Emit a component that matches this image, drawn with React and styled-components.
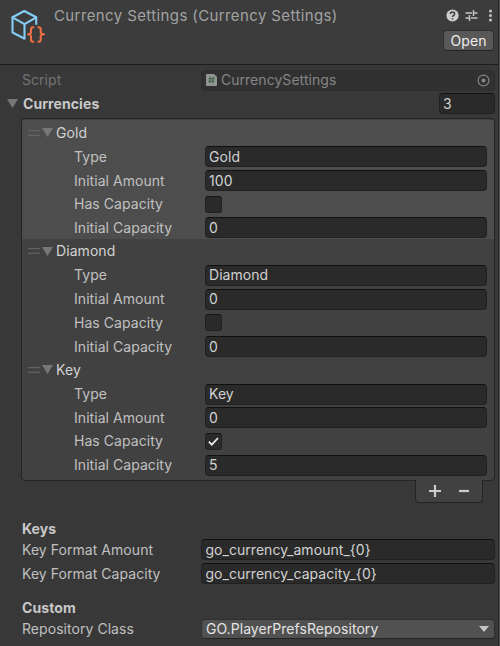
import React from "react";
import styled, { createGlobalStyle } from "styled-components";

const Global = createGlobalStyle`
  * { box-sizing: border-box; }
  body { margin: 0; background: #383838; }
`;

const Inspector = styled.main`
  width: 500px;
  height: 646px;
  overflow: hidden;
  background: #383838;
  border-right: 1px solid #505050;
  box-shadow: inset -1px 0 #282828;
  color: #c4c4c4;
  font: 400 14px/20px Inter, sans-serif;
  letter-spacing: 0.05px;
  white-space: nowrap;
`;

const Header = styled.header`
  display: flex;
  height: 65px;
  padding: 6px 4px 0 9px;
  background: #3c3c3c;
  border-bottom: 1px solid #1b1b1b;
  margin-right: 1px;
`;

const Title = styled.h1`
  flex: 1;
  margin: 0 0 0 9px;
  font: inherit;
  font-size: 15px;
  letter-spacing: 0.39px;
  color: #a2a2a2;
`;

const HeaderTools = styled.div`
  display: flex;
  flex-direction: column;
  align-items: flex-end;
  gap: 8px;
  padding-top: 3px;
`;

const OpenButton = styled.button`
  width: 51px;
  height: 21px;
  padding: 0;
  border: 1px solid #303030;
  border-bottom-color: #242424;
  border-radius: 4px;
  background: #585858;
  color: #eee;
  font: inherit;
  line-height: 19px;
  letter-spacing: 0.1px;
`;

const Properties = styled.section`
  padding: 4px 4px 0 22px;
`;

const Row = styled.div`
  display: flex;
  align-items: center;
  height: ${(p) => p.$height ?? 23.7}px;
  padding-left: ${(p) => p.$indent ?? 0}px;
`;

const Label = styled.span`
  width: ${(p) => p.$width ?? 179.4}px;
  flex: none;
  color: ${(p) => (p.$dim ? "#747474" : "#c0c0c0")};
`;

const Heading = styled.span`
  flex: 1;
  font-weight: 700;
  letter-spacing: 0.08px;
  color: #c8c8c8;
`;

const Field = styled.div`
  display: flex;
  align-items: center;
  flex: ${(p) => (p.$width ? "none" : 1)};
  width: ${(p) => (p.$width ? `${p.$width}px` : "auto")};
  height: 21px;
  padding: 0 4px 0 3px;
  border: 1px solid #212121;
  border-top-color: #101010;
  border-radius: 4px;
  background: #2a2a2a;
  color: #d2d2d2;
`;

const ObjectField = styled(Field)`
  padding: 0 4px 0 4px;
  border-color: #2e2e2e;
  background: #313131;
  color: #858585;
  gap: 3.5px;
  & > span { flex: 1; }
`;

const Select = styled(Field)`
  height: 20px;
  padding: 0 5px 0 3.6px;
  border-color: #303030;
  border-bottom-color: #242424;
  background: #515151;
  color: #e4e4e4;
  & > span { flex: 1; }
`;

const Checkbox = styled.span`
  display: grid;
  place-items: center;
  width: 17px;
  height: 17px;
  border: 1px solid #212121;
  border-top-color: #161616;
  border-radius: 3px;
  background: #2a2a2a;
`;

const Foldout = styled.div`
  display: flex;
  align-items: center;
  gap: 5.5px;
  margin-left: -15.5px;
  flex: 1;
`;

const List = styled.div`
  margin: 2px 0 0 -1px;
  width: 474px;
  height: 363px;
  padding-top: 1px;
  border: 1px solid #242424;
  border-radius: 4px;
  background: #414141;
  overflow: hidden;
`;

const Item = styled.div`
  height: 118.6px;
  padding-right: 7px;
  background: ${(p) => (p.$selected ? "#4d4d4d" : "#414141")};
`;

const ItemHead = styled.div`
  display: flex;
  align-items: center;
  height: 25px;
  padding-left: 5.5px;
  gap: 2.8px;
  color: #d2d2d2;
  & > svg { flex: none; }
`;

const ListFooter = styled.div`
  display: flex;
  align-items: center;
  justify-content: space-around;
  width: 68px;
  height: 23px;
  margin: -1px 0 0 393px;
  padding: 0 4px 1px 4px;
  position: relative;
  border: 1px solid #242424;
  border-top: none;
  border-radius: 0 0 4px 4px;
  background: #414141;
`;

const Group = styled.div`
  margin-top: ${(p) => p.$gap}px;
`;

const Arrow = ({ color = "#777777", width = 11, height = 9 }) => (
  <svg width={width} height={height} viewBox="0 0 11 9" preserveAspectRatio="none">
    <path d="M0 0H11L5.5 9Z" fill={color} />
  </svg>
);

const AssetIcon = () => (
  <svg width="36" height="40" viewBox="0 0 36 40">
    <g fill="none" stroke="#85cdf5" strokeWidth="2.1" strokeLinejoin="round" strokeLinecap="round">
      <path d="M27.2 18V11.3L15.3 5 3.5 11.3V26.5L15.3 32.5" />
      <path d="M3.5 11.3L15.5 18.2L27.2 11.3M15.5 18.2V32.5" />
    </g>
    <g fill="none" stroke="#f16d43" strokeWidth="2.1" strokeLinejoin="round">
      <path d="M25.2 21.2H24Q22 21.2 22 23.2V26Q22 28.3 19 28.3Q22 28.3 22 30.6V33.7Q22 35.7 24 35.7H25.2" />
      <path d="M28.5 21.2H29.7Q31.7 21.2 31.7 23.2V26Q31.7 28.3 35 28.3Q31.7 28.3 31.7 30.6V33.7Q31.7 35.7 29.7 35.7H28.5" />
    </g>
  </svg>
);

const ToolIcons = () => (
  <svg width="50" height="13" viewBox="0 0 50 13">
    <circle cx="8.5" cy="6.5" r="6.1" fill="#cccccc" />
    <path d="M6.4 5.1Q6.4 3.1 8.5 3.1T10.6 5Q10.6 6 9.4 6.7Q8.5 7.2 8.5 8M8.5 9.2V10.6" fill="none" stroke="#3c3c3c" strokeWidth="1.5" />
    <path d="M21.5 4H28M30 4H33.5M29.5 1V7M21.5 9H25M27 9H33.5M25.5 6V12" stroke="#c4c4c4" strokeWidth="1.5" />
    <g fill="#c4c4c4">
      <circle cx="46.5" cy="2" r="1.5" />
      <circle cx="46.5" cy="6.5" r="1.5" />
      <circle cx="46.5" cy="11" r="1.5" />
    </g>
  </svg>
);

const ScriptIcon = () => (
  <svg width="11" height="12" viewBox="0 0 12 13">
    <path d="M1 0H8.5L12 3V12Q12 13 11 13H1Q0 13 0 12V1Q0 0 1 0Z" fill="#949494" />
    <path d="M4.8 3L4.1 10M8 3L7.3 10M2.8 5H9.2M2.6 8H9" stroke="#44664a" strokeWidth="1.2" />
  </svg>
);

const PickerIcon = () => (
  <svg width="13" height="13" viewBox="0 0 13 13">
    <circle cx="6.5" cy="6.5" r="5.4" fill="none" stroke="#858585" strokeWidth="1.2" />
    <circle cx="6.5" cy="6.5" r="2" fill="#858585" />
  </svg>
);

const Grip = () => (
  <svg width="12" height="6" viewBox="0 0 12 6">
    <path d="M0 .7H12M0 5.2H12" stroke="#6b6b6b" strokeWidth="1" />
  </svg>
);

const Check = () => (
  <svg width="13" height="11" viewBox="0 0 13 11">
    <path d="M1.8 5.7L4.8 8.7L11 2" fill="none" stroke="#eeeeee" strokeWidth="1.7" />
  </svg>
);

const Sign = ({ plus }) => (
  <svg width="12" height="12" viewBox="0 0 12 12">
    <path d={plus ? "M0 6H12M6 0V12" : "M1 6H11"} stroke="#cccccc" strokeWidth="2.2" />
  </svg>
);

const currencies = [
  { name: "Gold", amount: 100, capped: false, capacity: 0, selected: true },
  { name: "Diamond", amount: 0, capped: false, capacity: 0 },
  { name: "Key", amount: 0, capped: true, capacity: 5 },
];

const Property = ({ label, children }) => (
  <Row $indent={52}>
    <Label $width={131}>{label}</Label>
    {children}
  </Row>
);

const CurrencyItem = ({ currency }) => (
  <Item $selected={currency.selected}>
    <ItemHead>
      <Grip />
      <Arrow />
      <span>{currency.name}</span>
    </ItemHead>
    <Property label="Type"><Field>{currency.name}</Field></Property>
    <Property label="Initial Amount"><Field>{currency.amount}</Field></Property>
    <Property label="Has Capacity"><Checkbox>{currency.capped && <Check />}</Checkbox></Property>
    <Property label="Initial Capacity"><Field>{currency.capacity}</Field></Property>
  </Item>
);

export default function App() {
  return (
    <Inspector>
      <Global />
      <Header>
        <AssetIcon />
        <Title>Currency Settings (Currency Settings)</Title>
        <HeaderTools>
          <ToolIcons />
          <OpenButton>Open</OpenButton>
        </HeaderTools>
      </Header>
      <Properties>
        <Row $height={22}>
          <Label $dim>Script</Label>
          <ObjectField>
            <ScriptIcon />
            <span>CurrencySettings</span>
            <PickerIcon />
          </ObjectField>
        </Row>
        <Row $height={25}>
          <Foldout>
            <Arrow />
            <Heading>Currencies</Heading>
          </Foldout>
          <Field $width={56}>3</Field>
        </Row>
        <List>
          {currencies.map((c) => <CurrencyItem key={c.name} currency={c} />)}
        </List>
        <ListFooter>
          <Sign plus />
          <Sign />
        </ListFooter>
        <Group $gap={17}>
          <Row $height={18}><Heading>Keys</Heading></Row>
          <Row><Label>Key Format Amount</Label><Field>{"go_currency_amount_{0}"}</Field></Row>
          <Row><Label>Key Format Capacity</Label><Field>{"go_currency_capacity_{0}"}</Field></Row>
        </Group>
        <Group $gap={14}>
          <Row $height={18}><Heading>Custom</Heading></Row>
          <Row>
            <Label>Repository Class</Label>
            <Select>
              <span>GO.PlayerPrefsRepository</span>
              <Arrow color="#c4c4c4" width={10} height={6} />
            </Select>
          </Row>
        </Group>
      </Properties>
    </Inspector>
  );
}
